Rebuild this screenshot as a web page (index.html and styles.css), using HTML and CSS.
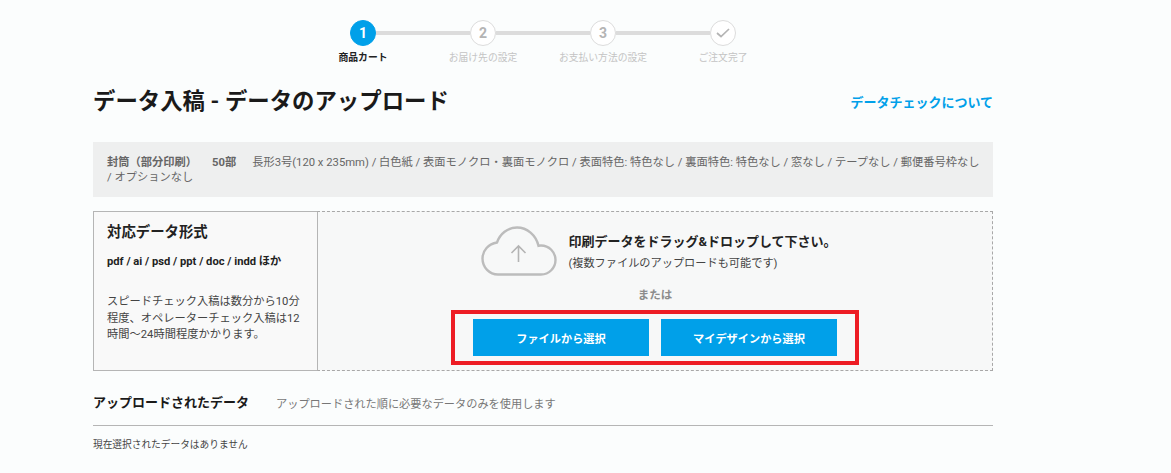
FILE: index.html
```
<!DOCTYPE html>
<html lang="ja">
<head>
<meta charset="utf-8">
<title>データ入稿</title>
<link rel="stylesheet" href="styles.css">
</head>
<body>
<main class="page">
  <ol class="steps">
    <li class="step active"><span class="dot">1</span><span class="step-label">商品カート</span></li>
    <li class="step"><span class="dot">2</span><span class="step-label">お届け先の設定</span></li>
    <li class="step"><span class="dot">3</span><span class="step-label">お支払い方法の設定</span></li>
    <li class="step"><span class="dot"><svg width="14" height="10" viewBox="0 0 14 10"><path d="M1 5 L5 8.5 L13 1" fill="none" stroke="#b4b4b4" stroke-width="1.7"/></svg></span><span class="step-label">ご注文完了</span></li>
  </ol>
  <header class="title-row">
    <h1>データ入稿 - データのアップロード</h1>
    <a class="check-link">データチェックについて</a>
  </header>
  <section class="summary">
    <b>封筒（部分印刷）</b><b class="qty">50部</b><span>長形3号(120 x 235mm) / 白色紙 / 表面モノクロ・裏面モノクロ / 表面特色: 特色なし / 裏面特色: 特色なし / 窓なし / テープなし / 郵便番号枠なし / オプションなし</span>
  </section>
  <section class="upload">
    <aside class="formats">
      <h2>対応データ形式</h2>
      <p class="types">pdf / ai / psd / ppt / doc / indd ほか</p>
      <p class="note">スピードチェック入稿は数分から10分程度、オペレーターチェック入稿は12時間～24時間程度かかります。</p>
    </aside>
    <div class="drop">
      <div class="drop-head">
        <svg class="cloud" width="76" height="50" viewBox="0 0 76 50">
          <path d="M17 48.5 H60 C68 48.5 74.5 42 74.5 34 C74.5 26 68 19.5 60 19.5 C59 19.5 58.5 19.6 57.5 19.8 C55 9 46 1.5 36 1.5 C26.5 1.5 19 8 16 16.5 C7.5 18 1.5 24.5 1.5 32.5 C1.5 41.5 8.5 48.5 17 48.5 Z" fill="none" stroke="#bcbcbc" stroke-width="2.4"/>
          <path d="M37.5 36 V20 M30.5 27 L37.5 20 L44.5 27" fill="none" stroke="#b4b4b4" stroke-width="1.6"/>
        </svg>
        <div class="drop-text">
          <p class="drop-main">印刷データをドラッグ&amp;ドロップして下さい。</p>
          <p class="drop-sub">(複数ファイルのアップロードも可能です)</p>
        </div>
      </div>
      <p class="or">または</p>
      <div class="actions">
        <button class="btn">ファイルから選択</button>
        <button class="btn">マイデザインから選択</button>
      </div>
    </div>
  </section>
  <section class="uploaded">
    <div class="uploaded-head">
      <h2>アップロードされたデータ</h2>
      <p>アップロードされた順に必要なデータのみを使用します</p>
    </div>
    <p class="empty">現在選択されたデータはありません</p>
  </section>
</main>
</body>
</html>
```
FILE: styles.css
```
* { box-sizing: border-box; }
html, body { margin: 0; padding: 0; }
body {
  background: #fbfdfd;
  color: #222;
  font-family: Roboto, "Noto Sans CJK JP", sans-serif;
  height: 473px;
  overflow: hidden;
}
h1, h2, p, ol { margin: 0; padding: 0; }
.page { width: 900px; margin-left: 93px; }

.steps {
  list-style: none;
  display: flex;
  justify-content: center;
  padding-top: 20px;
  height: 83px;
}
.step {
  position: relative;
  width: 120px;
  display: flex;
  flex-direction: column;
  align-items: center;
}
.step + .step::before {
  content: "";
  position: absolute;
  left: -47px;
  width: 94px;
  top: 11px;
  height: 4px;
  background: #dcdcdc;
}
.dot {
  width: 26px;
  height: 26px;
  border-radius: 50%;
  border: 1px solid #dcdcdc;
  background: #fff;
  color: #b4b4b4;
  font-size: 14px;
  font-weight: 700;
  display: flex;
  align-items: center;
  justify-content: center;
}
.active .dot { background: #00a0e9; border-color: #00a0e9; color: #fff; }
.step-label {
  margin-top: 5px;
  font-size: 9.8px;
  line-height: 14px;
  color: #c4c4c4;
  white-space: nowrap;
}
.active .step-label { color: #222; font-weight: 700; }

.title-row {
  display: flex;
  justify-content: space-between;
  align-items: center;
  height: 36px;
}
h1 { font-size: 22.4px; font-weight: 700; line-height: 36px; color: #1a1a1a; }
.check-link { font-size: 13px; font-weight: 700; color: #00a0e9; }

.summary {
  margin-top: 23px;
  height: 55px;
  background: #eeefef;
  padding: 13px 12px 0 14px;
  font-size: 11.25px;
  line-height: 15px;
  color: #666;
}
.summary b { font-weight: 700; }
.qty { margin: 0 16px 0 15px; }

.upload {
  margin-top: 14px;
  height: 160px;
  display: flex;
}
.formats {
  width: 225px;
  background: #f9f9f9;
  border: 1px solid #b5b5b5;
  padding: 11px 13px;
  flex: none;
}
.formats h2 { font-size: 14.4px; line-height: 20px; font-weight: 700; color: #222; }
.types { margin-top: 10px; font-size: 11.2px; line-height: 18px; font-weight: 700; color: #222; }
.note { margin-top: 23px; font-size: 11.25px; line-height: 16.5px; color: #444; }

.drop {
  flex: 1;
  margin-left: -1px;
  background: #f7f8f8;
  border: 1px dashed #a8a8a8;
  border-left: 1px solid #b5b5b5;
  display: flex;
  flex-direction: column;
  align-items: center;
}
.drop-head {
  display: flex;
  align-items: flex-start;
  padding-top: 14px;
  margin-left: 8px;
  height: 68px;
}
.cloud { margin-right: 11px; flex: none; }
.drop-main { margin-top: 6px; font-size: 13px; line-height: 20px; font-weight: 700; color: #222; }
.drop-sub { margin-top: 2px; font-size: 11.2px; line-height: 20px; color: #444; }
.or { margin-top: 7px; font-size: 11.5px; line-height: 16px; font-weight: 700; color: #8c8c8c; }
.actions {
  margin-top: 7px;
  width: 408px;
  height: 55px;
  border: 4px solid #ed1c24;
  display: flex;
  justify-content: center;
  align-items: center;
  gap: 12px;
}
.btn {
  width: 176px;
  height: 37px;
  border: 0;
  padding: 0;
  background: #00a0e9;
  color: #fff;
  font: 700 11.2px Roboto, "Noto Sans CJK JP", sans-serif;
}

.uploaded { margin-top: 18px; }
.uploaded-head {
  display: flex;
  align-items: center;
  height: 37px;
  border-bottom: 1px solid #b5b5b5;
  padding-bottom: 8px;
}
.uploaded-head h2 { font-size: 13px; margin-bottom: 3px; font-weight: 700; color: #1a1a1a; }
.uploaded-head p { margin-left: 27px; font-size: 11.2px; color: #777; }
.empty { margin-top: 12px; font-size: 9.7px; line-height: 14px; color: #444; }
```
